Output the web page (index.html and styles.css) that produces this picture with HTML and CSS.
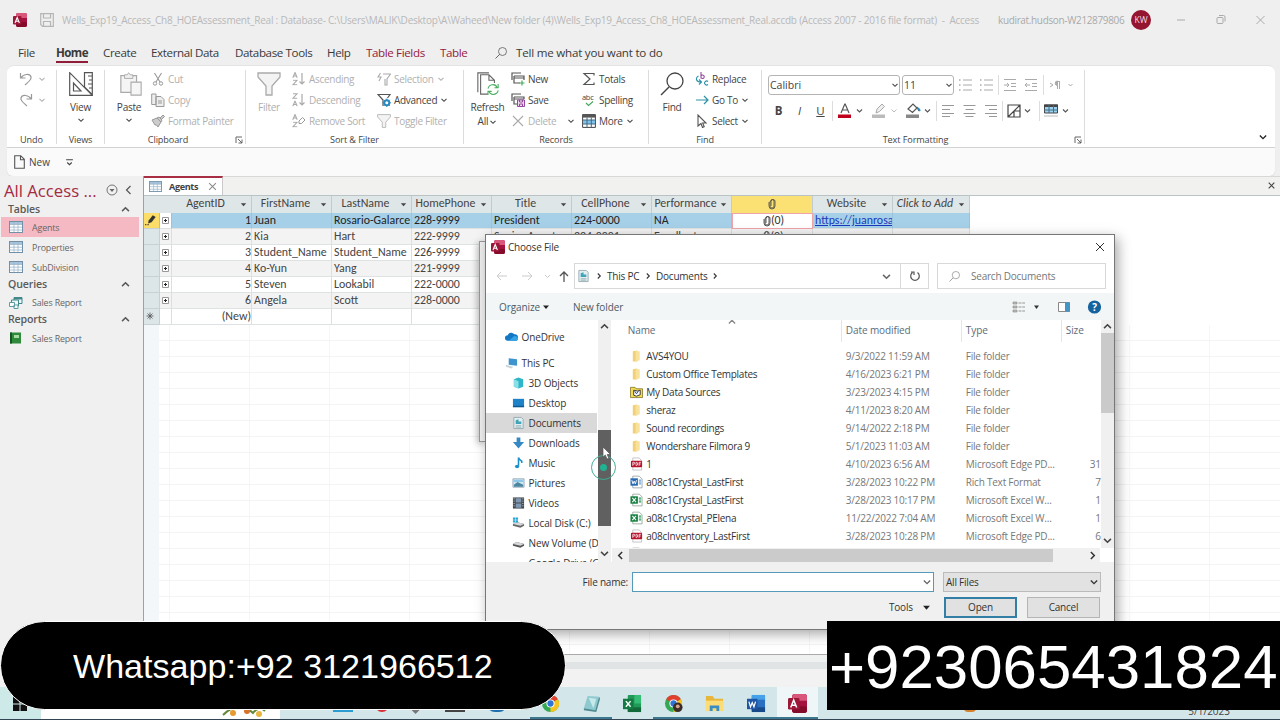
FILE: index.html
```html
<!DOCTYPE html>
<html lang="en">
<head>
<meta charset="UTF-8">
<meta name="viewport" content="width=device-width, initial-scale=1.0">
<title>Access</title>
<link rel="stylesheet" href="styles.css">
</head>
<body>

<svg class="sprite">
    <symbol id="i-access" viewBox="0 0 14 14"><rect x="3" width="11" height="14" rx="2" fill="#a4123f"/><path d="M3 2q0-2 2-2h7q2 0 2 2v3H3z" fill="#d8577b"/><rect x="3" y="9" width="11" height="5" rx="2" fill="#850b2a"/><rect y="3" width="8.500" height="8.500" rx="1" fill="#9c1738"/><path d="M2 10l2.200-5.500L6.400 10M2.800 8.200h2.800" fill="none" stroke="#fff" stroke-width="1.100"/></symbol>
    <symbol id="i-chev" viewBox="0 0 8 8"><path d="M1.500 2.800L4 5.300l2.500-2.500" fill="none" stroke="currentColor" stroke-width="1.100"/></symbol>
    <symbol id="i-tri" viewBox="0 0 8 8"><path d="M1 2.500h6L4 6z" fill="currentColor"/></symbol>
    <symbol id="i-table" viewBox="0 0 14 12"><rect x=".5" y=".5" width="13" height="11" fill="#fff" stroke="#7291a8"/><path d="M1 1h12v2.500H1z" fill="#a6c4dd"/><path d="M1 3.500h12M1 6.200h12M1 9h12M5 1v10M9 1v10" stroke="#9cb6c9" stroke-width=".8"/></symbol>
    <symbol id="i-launch" viewBox="0 0 8 8"><path d="M1 7V1h6M3 3l4 4M7 3.500V7H3.500" fill="none" stroke="#555" stroke-width=".9"/></symbol>
    <symbol id="i-funnel" viewBox="0 0 24 24"><path d="M1 1h22v4l-8 9v9H9v-9L1 5z" fill="#f3f3f3" stroke="#aaa" stroke-width="1.300"/></symbol>
    <symbol id="i-lens" viewBox="0 0 24 24"><circle cx="15" cy="9" r="8" fill="none" stroke="currentColor" stroke-width="1.300"/><path d="M9 15L1 23" stroke="currentColor" stroke-width="1.500"/></symbol>
    <symbol id="i-clip" viewBox="0 0 8 12"><path d="M2 4v4a2 2 0 0 0 4 0V3a1.500 1.500 0 0 0-3 0v5M2 4a3 3 0 0 1 5-1.500V8a3 3 0 0 1-6 0V4" fill="none" stroke="currentColor" stroke-width=".8"/></symbol>
    <symbol id="i-folder" viewBox="0 0 14 14"><path d="M3 2l5-1v12H3z" fill="#f1d077"/><path d="M6 2h4.500v9.500L6 13z" fill="#f8e29b"/></symbol>
    <symbol id="i-pdf" viewBox="0 0 14 14"><path d="M3 .5h7l2.500 3v10H3z" fill="#fff" stroke="#aaa" stroke-width=".7"/><rect x="1" y="3.500" width="12" height="7" rx="1" fill="#b5122b"/><path d="M3 9V5.200h1.200q1 0 1 1t-1 1H3M6.500 5.200V8.600h.6q1.200 0 1.200-1.700t-1.200-1.700zM9.800 9V5.200H12M9.800 7h1.800" fill="none" stroke="#fff" stroke-width=".8"/></symbol>
    <symbol id="i-xls" viewBox="0 0 14 14"><path d="M3 .7h7l3 3v9.600H3z" fill="#fff" stroke="#849b8c" stroke-width=".8"/><path d="M9.500 5h2.500M9.500 7h2.500M9.500 9h2.500" stroke="#299b60" stroke-width="1.200"/><rect x=".5" y="3" width="8" height="8" fill="#16803f"/><path d="M2.500 4.800l4 4.400M6.500 4.800l-4 4.400" stroke="#fff" stroke-width="1.200"/></symbol>
    <symbol id="i-doc" viewBox="0 0 14 14"><path d="M3 .7h7l3 3v9.600H3z" fill="#fff" stroke="#8494a0" stroke-width=".8"/><path d="M9.500 5h2.500M9.500 7h2.500M9.500 9h2.500" stroke="#3a86c9" stroke-width="1"/><rect x=".5" y="3" width="8" height="8" fill="#2a6cb3"/><path d="M2 5l1.200 4L4.500 6l1.300 3L7 5" fill="none" stroke="#fff"/></symbol>
    <symbol id="i-docs" viewBox="0 0 14 14"><path d="M2 1h8l2 2v10H2z" fill="#e2eef0" stroke="#8fa3ab" stroke-width=".9"/><path d="M4 4l3-1v2.500h3V8H4z" fill="#3fa4b8"/><path d="M4 10h6M4 11.500h6" stroke="#98b2ba"/></symbol>
    <symbol id="i-sort" viewBox="0 0 14 14"><path d="M10 1v11M7.500 9.500L10 12l2.500-2.500" fill="none" stroke="#aaa" stroke-width="1.200"/></symbol>
    <symbol id="i-a" viewBox="0 0 6 6"><path d="M.8 5.700L3 .5l2.200 5.200M1.500 4h3" fill="none" stroke="#aaa" stroke-width="1.100"/></symbol>
    <symbol id="i-z" viewBox="0 0 6 6"><path d="M1 .8h4L1 5.200h4.200" fill="none" stroke="#aaa" stroke-width="1.100"/></symbol>
    <symbol id="i-plus" viewBox="0 0 7 7"><path d="M.5.500h6v6h-6z" fill="#fff" stroke="#999"/><path d="M2 3.500h3M3.500 2v3" stroke="#222"/></symbol>
</svg>

<div class="app">
    <div class="titlebar">
        <svg class="logo"><use href="#i-access"/></svg>
        <svg class="save" viewBox="0 0 14 14"><path d="M.7.7h12.600v12.600H2.500L.7 11.500zM3.500 1v4h7V1M3.500 13V8.500h7V13" fill="none" stroke="#b5b5b5" stroke-width="1.200"/></svg>
        <span class="doc-title">Wells_Exp19_Access_Ch8_HOEAssessment_Real : Database- C:\Users\MALIK\Desktop\A\Waheed\New folder (4)\Wells_Exp19_Access_Ch8_HOEAssessment_Real.accdb (Access 2007 - 2016 file format)&nbsp; -&nbsp; Access</span>
        <span class="user">kudirat.hudson-W212879806</span>
        <span class="avatar">KW</span>
        <svg class="winbtns" viewBox="0 0 90 12"><path d="M1 6h8M80.500 2l8 8M88.500 2l-8 8" stroke="#aaa" stroke-width="1" fill="none"/><rect x="41" y="3.500" width="6" height="6" rx="1" fill="none" stroke="#aaa"/><path d="M43 1.500h4.500q1.500 0 1.500 1.500v4.500" fill="none" stroke="#aaa"/></svg>
    </div>

    <div class="menu">
        <span class="m-file">File</span>
        <span class="m-home">Home</span>
        <span class="m-create">Create</span>
        <span class="m-ext">External Data</span>
        <span class="m-db">Database Tools</span>
        <span class="m-help">Help</span>
        <span class="m-fields">Table Fields</span>
        <span class="m-table">Table</span>
        <svg class="m-lens"><use href="#i-lens"/></svg>
        <span class="m-tell">Tell me what you want to do</span>
    </div>

    <div class="ribbon">
        <div class="group g-undo">
            <div class="group-body">
                <div class="col">
                    <div class="cmd off"><svg class="ic" viewBox="0 0 14 14"><path d="M1.500 1v5h5M2 6c2-4 9-5 10-1 .8 3-3 5-6 8" fill="none" stroke="#999" stroke-width="1.200"/></svg><svg class="chev"><use href="#i-chev"/></svg></div>
                    <div class="cmd off"><svg class="ic" viewBox="0 0 14 14"><path d="M12.500 1v5h-5M12 6c-2-4-9-5-10-1-.8 3 3 5 6 8" fill="none" stroke="#999" stroke-width="1.200"/></svg><svg class="chev"><use href="#i-chev"/></svg></div>
                </div>
            </div>
            <div class="group-name">Undo</div>
        </div>
        <div class="group g-views">
            <div class="group-body">
                <div class="big">
                    <svg class="big-ic" viewBox="0 0 24 24"><path d="M.7.7v22.600h22.600zM4.500 11v8h7.500zM15.500 15V.7h7.800v22z" fill="none" stroke="#555" stroke-width="1.200"/><path d="M19 4h4M20 8h3M19 12h4M20 16h3" stroke="#555"/></svg>
                    <span>View</span>
                    <svg class="chev"><use href="#i-chev"/></svg>
                </div>
            </div>
            <div class="group-name">Views</div>
        </div>
        <div class="group g-clip">
            <div class="group-body">
                <div class="big">
                    <svg class="big-ic paste-ic" viewBox="0 0 24 26"><path d="M1 4h17v18H1z" fill="#f5f5f5" stroke="#aaa" stroke-width="1.300"/><path d="M5 7V3h3q1.500-4 3 0h3v4z" fill="#eee" stroke="#aaa"/><path d="M12 11h11v14H12z" fill="#f6f6f6" stroke="#aaa" stroke-width="1.200"/></svg>
                    <span>Paste</span>
                    <svg class="chev"><use href="#i-chev"/></svg>
                </div>
                <div class="col">
                    <div class="cmd off"><svg class="ic" viewBox="0 0 14 14"><path d="M3.500 1l5.500 9M10.500 1L5 10" stroke="#999" stroke-width="1.100"/><circle cx="4" cy="11.500" r="1.700" fill="none" stroke="#999"/><circle cx="10" cy="11.500" r="1.700" fill="none" stroke="#999"/></svg>Cut</div>
                    <div class="cmd off"><svg class="ic" viewBox="0 0 14 14"><path d="M.7 1H5v10.500H.7zM5 3.500h5l3 3v7H5zM7 8h4M7 10h4" fill="#eee" stroke="#999"/></svg>Copy</div>
                    <div class="cmd off"><svg class="ic" viewBox="0 0 14 14"><path d="M1 6l5-2 4 4-3 5-1.500-2L4 11zM6 4l2-1 3 3-1 2M9 4l3-3 1.500 1.500-3 3" fill="#ccc" stroke="#999"/></svg>Format Painter</div>
                </div>
            </div>
            <div class="group-name">Clipboard</div>
            <svg class="launch"><use href="#i-launch"/></svg>
        </div>
        <div class="group g-sort">
            <div class="group-body">
                <div class="big off">
                    <svg class="big-ic"><use href="#i-funnel"/></svg>
                    <span>Filter</span>
                </div>
                <div class="col col-a">
                    <div class="cmd off"><svg class="ic" viewBox="0 0 14 14"><use href="#i-a" width="6" height="6"/><use href="#i-z" y="7.500" width="6" height="6"/><use href="#i-sort" width="14" height="14"/></svg>Ascending</div>
                    <div class="cmd off"><svg class="ic" viewBox="0 0 14 14"><use href="#i-z" width="6" height="6"/><use href="#i-a" y="7.500" width="6" height="6"/><use href="#i-sort" width="14" height="14"/></svg>Descending</div>
                    <div class="cmd off"><svg class="ic" viewBox="0 0 14 14"><use href="#i-a" width="6" height="6"/><use href="#i-z" y="7.500" width="6" height="6"/><path d="M7 7l3.500-3.500L13 6 9.500 9.500H7z" fill="none" stroke="#999"/></svg>Remove Sort</div>
                </div>
                <div class="col">
                    <div class="cmd off"><svg class="ic" viewBox="0 0 14 14"><path d="M6 2h7.500L10 7v6H8V7M3.500 1L1 5h3L2 9" fill="none" stroke="#aaa" stroke-width="1.100"/></svg>Selection<svg class="chev"><use href="#i-chev"/></svg></div>
                    <div class="cmd"><svg class="ic" viewBox="0 0 14 14"><path d="M6 13V7L1 1.500h12L10.500 5" fill="none" stroke="#555" stroke-width="1.200"/><circle cx="9.800" cy="9.800" r="2.500" fill="#fff" stroke="#2b8bc0" stroke-width="2"/><path d="M9.800 5.500v2M9.800 12v2M5.600 9.800h2M12 9.800h2M6.800 6.800l1.500 1.500M11.300 11.300l1.500 1.500M12.800 6.800l-1.500 1.500M8.300 11.300l-1.500 1.500" stroke="#2b8bc0"/></svg>Advanced<svg class="chev"><use href="#i-chev"/></svg></div>
                    <div class="cmd off"><svg class="ic"><use href="#i-funnel"/></svg>Toggle Filter</div>
                </div>
            </div>
            <div class="group-name">Sort &amp; Filter</div>
        </div>
        <div class="group g-rec">
            <div class="group-body">
                <div class="big big-refresh">
                    <svg class="big-ic" viewBox="0 0 24 26"><path d="M1 22V1h12" fill="none" stroke="#666" stroke-width="1.200"/><path d="M12 24H4V3h9l6 6v3M13 3v6h6" fill="none" stroke="#666" stroke-width="1.200"/><path d="M12 18c1-5 8-6 10-1M23 13v4h-4M23 20c-1 5-8 6-10 1M12 25v-4h4" fill="none" stroke="#4bae62" stroke-width="1.200"/></svg>
                    <span>Refresh</span>
                    <span>All <svg class="chev"><use href="#i-chev"/></svg></span>
                </div>
                <div class="col col-a">
                    <div class="cmd"><svg class="ic" viewBox="0 0 14 14"><path d="M1 8V1h9M3 4h10v4M3 4v7h6M3 6h10" fill="none" stroke="#555" stroke-width="1.200"/><path d="M11 8.500v5M8.500 11h5" stroke="#45aa5d" stroke-width="1.200"/></svg>New</div>
                    <div class="cmd"><svg class="ic" viewBox="0 0 14 14"><path d="M1 8V1h9M3 4h10v2M3 4v7h3M3 6h10" fill="none" stroke="#555" stroke-width="1.200"/><path d="M6.500 7h7v6.500h-7zM8.500 7v2h3V7M8.500 13v-2h3v2" fill="#efd9f0" stroke="#964a9c"/></svg>Save</div>
                    <div class="cmd off"><svg class="ic" viewBox="0 0 14 14"><path d="M2 2l10 10M12 2L2 12" stroke="#aaa" stroke-width="1.100"/></svg>Delete<svg class="chev chev-far"><use href="#i-chev"/></svg></div>
                </div>
                <div class="col">
                    <div class="cmd"><svg class="ic" viewBox="0 0 14 14"><path d="M12 3.500V1.500H2L8 7l-6 5.500h10v-2" fill="none" stroke="#555" stroke-width="1.200"/></svg>Totals</div>
                    <div class="cmd"><span class="ic abc">abc<svg viewBox="0 0 14 6"><path d="M4 2l2.500 2.500L11 .5" fill="none" stroke="#45aa5d" stroke-width="1.200"/></svg></span>Spelling</div>
                    <div class="cmd"><svg class="ic" viewBox="0 0 14 14"><path d="M.6.6h12.800v12.800H.6z" fill="#fff" stroke="#444"/><path d="M.6.6h12.800v3H.6z" fill="#555"/><path d="M1 6h12v4H1z" fill="#7fc3ec"/><path d="M.6 6h12.800M.6 10h12.800M5 3.600v9.800M9.300 3.600v9.800" stroke="#446a80"/></svg>More<svg class="chev"><use href="#i-chev"/></svg></div>
                </div>
            </div>
            <div class="group-name">Records</div>
        </div>
        <div class="group g-find">
            <div class="group-body">
                <div class="big">
                    <svg class="big-ic"><use href="#i-lens"/></svg>
                    <span>Find</span>
                </div>
                <div class="col">
                    <div class="cmd"><svg class="ic" viewBox="0 0 14 14"><path d="M6 0v6.500M6 4a1.700 1.700 0 1 1 0 1.500" fill="none" stroke="#964a9c" stroke-width="1.100"/><path d="M13 9.500a2 2 0 1 0 0 3M3.500 4C0 6 1 10 6 10M4 7.500L6.500 10 4 12.500" fill="none" stroke="#2e91a5" stroke-width="1.100"/></svg>Replace</div>
                    <div class="cmd"><svg class="ic" viewBox="0 0 14 14"><path d="M1 7h12M9 3l4 4-4 4" fill="none" stroke="#2e91a5" stroke-width="1.200"/></svg>Go To<svg class="chev"><use href="#i-chev"/></svg></div>
                    <div class="cmd"><svg class="ic" viewBox="0 0 14 14"><path d="M3 1v11l3-2.500 1.500 4 1.700-.8L7.700 9H11z" fill="none" stroke="#555" stroke-width="1.100"/></svg>Select<svg class="chev"><use href="#i-chev"/></svg></div>
                </div>
            </div>
            <div class="group-name">Find</div>
        </div>
        <div class="group g-text">
            <div class="group-body format">
                <div class="format-row">
                    <div class="combo font-name">Calibri<svg class="chev"><use href="#i-chev"/></svg></div>
                    <div class="combo font-size">11<svg class="chev"><use href="#i-chev"/></svg></div>
                    <svg class="row-ics" viewBox="0 0 120 20"><g stroke="#aaa" fill="none"><path d="M9 5h9M9 10h9M9 15h9M30 5h9M30 10h9M30 15h9M50 4.500h12M57 8.500h5M57 11.500h5M50 15.500h12M50 10h5M53 8l2 2-2 2M71 4.500h12M78 8.500h5M78 11.500h5M71 15.500h12M71 10h5M73 8l-2 2 2 2"/><path d="M5 5h1.500M5 10h1.500M5 15h1.500M26 5h1.500M26 10h1.500M26 15h1.500" stroke-width="1.500"/><path d="M44.500 0v20M89.500 0v20" stroke="#ddd"/><path d="M96 8l3 2-3 2M103.500 14V6.500h2.500M105.500 6.500V14"/><path d="M103.500 6v4.500a2 2 0 0 1 0-4.500" fill="#aaa"/><path d="M114.500 9l2 2 2-2"/></g></svg>
                </div>
                <div class="format-row">
                    <b class="fb">B</b><i class="fb">I</i><u class="fb">U</u>
                    <svg class="row-ics2" viewBox="0 0 245 20">
                        <path d="M1.500 0v20M105.500 0v20M171.500 0v20M208.500 0v20" stroke="#ddd"/>
                        <path d="M10 12l3.800-9h.4l3.800 9M11.500 9h5" fill="none" stroke="#555" stroke-width="1.200"/><rect x="7" y="13.500" width="13" height="3.500" fill="#c0001a"/>
                        <path d="M26 8.500l2.500 2.500 2.500-2.500M94 8.500l2.500 2.500L99 8.500M194 8.500l2.500 2.500 2.500-2.500M232 8.500l2.500 2.500 2.500-2.500" fill="none" stroke="#555" stroke-width="1.100"/>
                        <path d="M60.500 8.500l2.500 2.500 2.500-2.500" fill="none" stroke="#bbb"/>
                        <path d="M45 12l1-4 5-5 2.500 2.500-5 5z" fill="#eee" stroke="#aaa"/><rect x="41" y="13.500" width="13" height="3.500" fill="#bbb"/>
                        <path d="M77 8l5-5 4 4-4.500 4.500zM86 6l2 4" fill="#fff" stroke="#555" stroke-width="1.200"/><path d="M87 7l2 3" stroke="#2b8bc0" stroke-width="2"/><rect x="75" y="13.500" width="13" height="3.500" fill="#888"/>
                        <path d="M111 4.500h12M111 8.500h8M111 12.500h12M111 15.500h8M132.500 4.500h12M134.500 8.500h8M132.500 12.500h12M134.500 15.500h8M154 4.500h12M158 8.500h8M154 12.500h12M158 15.500h8" stroke="#999"/>
                        <path d="M177 4h12v12h-12zM177 16l12-12M183 16v-6h6" fill="none" stroke="#444" stroke-width="1.200"/>
                        <path d="M213.500 4h13v8h-13z" fill="#9bd2f0" stroke="#444"/><path d="M213 3.500h14v2.500h-14z" fill="#444"/><path d="M213 9h14M218 4v8M222.500 4v8" stroke="#446a80"/><path d="M213 15h14" stroke="#ddd" stroke-width="2"/>
                    </svg>
                </div>
            </div>
            <div class="group-name">Text Formatting</div>
            <svg class="launch"><use href="#i-launch"/></svg>
        </div>
        <svg class="collapse"><use href="#i-chev"/></svg>
    </div>

    <div class="quick">
        <svg class="page-ic" viewBox="0 0 11 14"><path d="M.7.7h6l3.600 3.600v9H.7zM6.500.7v4h4" fill="none" stroke="#555" stroke-width="1.100"/></svg>
        <span>New</span>
        <svg class="more-ic" viewBox="0 0 8 8"><path d="M1 1.500h6M2 4l2 2 2-2" fill="none" stroke="#444"/></svg>
    </div>

    <div class="work">
        <div class="nav">
            <div class="nav-title"><span>All Access ...</span>
                <svg class="nav-ics" viewBox="0 0 28 12"><circle cx="6" cy="6" r="5" fill="none" stroke="#666" stroke-width=".9"/><path d="M3.500 5h5L6 8z" fill="#666"/><path d="M24.500 2l-4 4 4 4" fill="none" stroke="#555" stroke-width="1.200"/></svg>
            </div>
            <div class="nav-head">Tables<svg class="up"><use href="#i-chev"/></svg></div>
            <div class="nav-item active"><svg><use href="#i-table"/></svg>Agents</div>
            <div class="nav-item"><svg><use href="#i-table"/></svg>Properties</div>
            <div class="nav-item"><svg><use href="#i-table"/></svg>SubDivision</div>
            <div class="nav-head">Queries<svg class="up"><use href="#i-chev"/></svg></div>
            <div class="nav-item single"><svg viewBox="0 0 14 12"><path d="M5 .5h8v6H5z" fill="#eef8f8" stroke="#41878c"/><path d="M2.500 3h7v6h-7z" fill="#eef8f8" stroke="#41878c"/><path d="M.5 5.500h5v4h-5zM5 8h4v3.500H5z" fill="#fff" stroke="#5b9da5"/><path d="M5 1h8v1.500H5z" fill="#41878c"/></svg>Sales Report</div>
            <div class="nav-head">Reports<svg class="up"><use href="#i-chev"/></svg></div>
            <div class="nav-item single"><svg viewBox="0 0 14 12"><path d="M1 .5h11v11H1z" fill="#2f8a3c"/><path d="M1 .5h2v11H1z" fill="#14561f"/><path d="M5 3h5v3H5z" fill="#a8dba4"/></svg>Sales Report</div>
        </div>

        <div class="main">
            <div class="doc-tabs">
                <div class="doc-tab"><svg class="tab-ic"><use href="#i-table"/></svg><b>Agents</b><svg class="x" viewBox="0 0 8 8"><path d="M1 1l6 6M7 1L1 7" stroke="#888" stroke-width=".9"/></svg></div>
                <svg class="x close-all" viewBox="0 0 8 8"><path d="M1.500 1.500l5 5M6.500 1.500l-5 5" stroke="#444"/></svg>
            </div>
            <div class="sheet">
                <div class="row head">
                    <span></span><span></span>
                    <span>AgentID<svg><use href="#i-tri"/></svg></span>
                    <span>FirstName<svg><use href="#i-tri"/></svg></span>
                    <span>LastName<svg><use href="#i-tri"/></svg></span>
                    <span>HomePhone<svg><use href="#i-tri"/></svg></span>
                    <span>Title<svg><use href="#i-tri"/></svg></span>
                    <span>CellPhone<svg><use href="#i-tri"/></svg></span>
                    <span>Performance<svg><use href="#i-tri"/></svg></span>
                    <span class="attach"><svg class="clip"><use href="#i-clip"/></svg></span>
                    <span>Website<svg><use href="#i-tri"/></svg></span>
                    <span class="add">Click to Add<svg><use href="#i-tri"/></svg></span>
                </div>
                <div class="row current">
                    <span class="edit"><svg viewBox="0 0 12 10"><path d="M3.500 8L4 5.500 7.500 1 10 2.500 6.500 7z" fill="#333"/><path d="M1 9h1M3 9h1" stroke="#333"/></svg></span><span class="plus"><svg><use href="#i-plus"/></svg></span>
                    <span class="num">1</span><span>Juan</span><span>Rosario-Galarce</span><span>228-9999</span><span>President</span><span>224-0000</span><span>NA</span>
                    <span class="cell-attach"><svg class="clip"><use href="#i-clip"/></svg>(0)</span><span class="link">https://juanrosa</span><span></span>
                </div>
                <div class="row alt"><span></span><span class="plus"><svg><use href="#i-plus"/></svg></span><span class="num">2</span><span>Kia</span><span>Hart</span><span>222-9999</span><span>Senior Agent</span><span>224-0001</span><span>Excellent</span><span class="att"><svg class="clip"><use href="#i-clip"/></svg>(0)</span><span></span><span></span></div>
                <div class="row"><span></span><span class="plus"><svg><use href="#i-plus"/></svg></span><span class="num">3</span><span>Student_Name</span><span>Student_Name</span><span>226-9999</span><span></span><span></span><span></span><span></span><span></span><span></span></div>
                <div class="row alt"><span></span><span class="plus"><svg><use href="#i-plus"/></svg></span><span class="num">4</span><span>Ko-Yun</span><span>Yang</span><span>221-9999</span><span></span><span></span><span></span><span></span><span></span><span></span></div>
                <div class="row"><span></span><span class="plus"><svg><use href="#i-plus"/></svg></span><span class="num">5</span><span>Steven</span><span>Lookabil</span><span>222-0000</span><span></span><span></span><span></span><span></span><span></span><span></span></div>
                <div class="row alt"><span></span><span class="plus"><svg><use href="#i-plus"/></svg></span><span class="num">6</span><span>Angela</span><span>Scott</span><span>228-0000</span><span></span><span></span><span></span><span></span><span></span><span></span></div>
                <div class="row"><span class="star"><svg viewBox="0 0 8 8"><path d="M4 .5v7M.5 4h7M1.500 1.500l5 5M6.500 1.500l-5 5" stroke="#555" stroke-width=".8"/></svg></span><span></span><span class="num">(New)</span><span></span><span></span><span></span><span></span><span></span><span></span><span></span><span></span><span></span></div>
                <div class="blank"></div>
            </div>
            <div class="record-bar"></div>
        </div>
    </div>
    <div class="status"></div>

    <div class="taskbar">
        <div class="start"><svg viewBox="0 0 14 14"><path d="M0 0h6.500v6.500H0zM7.500 0H14v6.500H7.500zM0 7.500h6.500V14H0zM7.500 7.500H14V14H7.500z" fill="#111"/></svg></div>
        <div class="search-box"><svg viewBox="0 0 48 16"><path d="M2 12q8-8 16-8t14 6q6-8 12-2" fill="none" stroke="#66883c" stroke-width="2"/><circle cx="12" cy="10" r="3" fill="#e59a32"/><circle cx="26" cy="8" r="3" fill="#d8702c"/><circle cx="38" cy="11" r="3" fill="#e8b441"/></svg></div>
        <div class="hidden-apps"><i class="c1"></i><i class="c2"></i><i class="c3"></i><i class="c4"></i><i class="c5"></i></div>
        <div class="task open"><svg viewBox="0 0 20 20"><circle cx="10" cy="10" r="9" fill="#35a853"/><path d="M10 10L2.200 5.500a9 9 0 0 1 15.600 0z" fill="#e2402f"/><path d="M10 10l7.800-4.500A9 9 0 0 1 10 19z" fill="#f8c51e"/><circle cx="10" cy="10" r="4.300" fill="#fff"/><circle cx="10" cy="10" r="3.300" fill="#2f75d8"/></svg></div>
        <div class="task open"><svg viewBox="0 0 20 20"><path d="M6 2l12 1-4 15-12-3z" fill="#8ec9cf"/><path d="M18 3l1 2-4 14-13-2v-2l12 2z" fill="#4e8a90"/><path d="M7 4l8 1-3 10" fill="#c6e9ea"/></svg></div>
        <div class="task"><svg viewBox="0 0 20 20"><rect x="5" y="1" width="14" height="18" rx="1" fill="#1f9a57"/><path d="M12 1h7v9h-7z" fill="#35bd75"/><path d="M5 14h14v5H5z" fill="#12693a"/><rect y="5" width="11" height="11" fill="#137a41"/><path d="M3 7.500l5 6M8 7.500l-5 6" stroke="#fff" stroke-width="1.600"/></svg></div>
        <div class="task open"><svg viewBox="0 0 20 20"><circle cx="10" cy="10" r="9" fill="#35a853"/><path d="M10 10L2.200 5.500a9 9 0 0 1 15.600 0z" fill="#e2402f"/><path d="M10 10l7.800-4.500A9 9 0 0 1 10 19z" fill="#f8c51e"/><circle cx="10" cy="10" r="4.300" fill="#fff"/><circle cx="10" cy="10" r="3.300" fill="#2f75d8"/><circle cx="14.500" cy="14" r="5" fill="#3c2c28"/><circle cx="14.500" cy="13" r="2" fill="#d9a88c"/></svg></div>
        <div class="task open"><svg viewBox="0 0 20 20"><path d="M1 2h7l2 3h9v13H1z" fill="#e8b63a"/><path d="M1 7h18v11H1z" fill="#fbdc77"/><path d="M5 18v-6h10v6h-3v-3H8v3z" fill="#3a8cc4"/></svg></div>
        <div class="task open"><svg viewBox="0 0 20 20"><rect x="5" y="1" width="14" height="18" rx="1" fill="#2a6fc0"/><path d="M5 1h14v5H5z" fill="#45a2ea"/><path d="M5 14h14v5H5z" fill="#174a8a"/><rect y="5" width="11" height="11" fill="#1f55a5"/><path d="M2 8l1.700 5.500L5.500 9l1.800 4.500L9 8" fill="none" stroke="#fff" stroke-width="1.300"/></svg></div>
        <div class="task current-app open"><svg><use href="#i-access"/></svg></div>
        <div class="tray"><i></i><span>5/1/2023</span></div>
    </div>
</div>

<div class="under-dialog"></div>

<div class="dialog">
    <div class="dlg-title"><svg class="logo"><use href="#i-access"/></svg><span>Choose File</span><svg class="dlg-x" viewBox="0 0 10 10"><path d="M1 1l8 8M9 1L1 9" stroke="#333"/></svg></div>
    <div class="dlg-nav">
        <svg class="arrows" viewBox="0 0 80 14"><path d="M17 7H7M11 3L7 7l4 4M32 7h10M38 3l4 4-4 4M55 6l2.500 2.500L60 6" fill="none" stroke="#ccc"/><path d="M74 13V3M70 7l4-4 4 4" fill="none" stroke="#555" stroke-width="1.300"/></svg>
        <div class="path"><svg class="docs"><use href="#i-docs"/></svg><svg class="right"><use href="#i-chev"/></svg><span class="pc">This PC</span><svg class="right"><use href="#i-chev"/></svg><span class="dc">Documents</span><svg class="right"><use href="#i-chev"/></svg><svg class="drop"><use href="#i-chev"/></svg>
            <div class="reload"><svg viewBox="0 0 12 12"><path d="M3.500 2.500a4.300 4.300 0 1 0 5 0M2 2h3v3" fill="none" stroke="#555" stroke-width="1.200"/></svg></div></div>
        <div class="search"><svg><use href="#i-lens"/></svg>Search Documents</div>
    </div>
    <div class="dlg-tools">
        <span class="org">Organize</span><svg class="tri"><use href="#i-tri"/></svg><span class="nf">New folder</span>
        <svg class="view-ics" viewBox="0 0 90 14"><path d="M1 2h4v2H1zM1 6h4v2H1zM1 10h4v2H1z" fill="#bbb" stroke="#888" stroke-width=".6"/><path d="M6.500 3H13M6.500 7H13M6.500 11H13" stroke="#999" stroke-dasharray="3 .7"/><path d="M22 5.500h5L24.500 9z" fill="#333"/><path d="M46.500 2.500h11v9h-11z" fill="#fff" stroke="#888"/><path d="M53 2.500h5v9h-5z" fill="#4295c7"/><circle cx="82.500" cy="7" r="6.600" fill="#14629e"/><text x="80.200" y="10.600" font-size="10" font-weight="700" fill="#fff">?</text></svg>
    </div>
    <div class="dlg-body">
        <div class="tree">
            <div class="leaf top"><svg viewBox="0 0 14 14"><path d="M3 11a3 3 0 0 1 0-6 4 4 0 0 1 7-1 3.500 3.500 0 0 1 1 7z" fill="#1278c4"/><path d="M4 11l6-5q4 0 4 3t-3 2z" fill="#35a3e8"/></svg>OneDrive</div>
            <div class="leaf top"><svg viewBox="0 0 14 14"><path d="M4 2l9 1v7l-9-1z" fill="#3e94cc"/><path d="M1 9l8 2-2 2-6-2z" fill="#c8d4da"/></svg>This PC</div>
            <div class="leaf"><svg viewBox="0 0 14 14"><path d="M2 3l5-2 5 2v8l-5 2-5-2z" fill="#2db5c8"/><path d="M2 3l5 2v8l-5-2z" fill="#8be0e7"/></svg>3D Objects</div>
            <div class="leaf"><svg viewBox="0 0 14 14"><path d="M1 2.500h12v9H1z" fill="#1d82c8"/><path d="M1 10h12v1.500H1z" fill="#0d588f"/></svg>Desktop</div>
            <div class="leaf sel"><svg><use href="#i-docs"/></svg>Documents</div>
            <div class="leaf"><svg viewBox="0 0 14 14"><path d="M5 1h4v5h4l-6 7-6-7h4z" fill="#3489c5"/></svg>Downloads</div>
            <div class="leaf"><svg viewBox="0 0 14 14"><path d="M7 1v9M7 1q1 3 3.500 4v2" fill="none" stroke="#1d91c9" stroke-width="1.700"/><ellipse cx="5.500" cy="10.800" rx="2.300" ry="1.900" fill="#1d91c9"/></svg>Music</div>
            <div class="leaf"><svg viewBox="0 0 14 14"><path d="M1 2.500h12v9H1z" fill="#d8e8ee" stroke="#9ab"/><path d="M2 9l4-3 6 3v2H2z" fill="#4a86a0"/><path d="M2 3.500h10V6H2z" fill="#8dc8e8"/></svg>Pictures</div>
            <div class="leaf"><svg viewBox="0 0 14 14"><path d="M1 1h12v12H1z" fill="#43494f"/><path d="M4 2h6v4.500H4zM4 7.500h6V12H4z" fill="#7e98b4"/><path d="M2.300 2v10M11.700 2v10" stroke="#ddd" stroke-dasharray="1 1.500"/></svg>Videos</div>
            <div class="leaf"><svg viewBox="0 0 14 14"><path d="M1 8l4-2 8 2v2l-4 2-8-2z" fill="#666"/><path d="M1 8l4-2 8 2-4 2z" fill="#d5d8da"/><path d="M1 1h2.500v2.500H1zM4 1h2.500v2.500H4zM1 4h2.500v2.500H1zM4 4h2.500v2.500H4z" fill="#22a7d8"/></svg>Local Disk (C:)</div>
            <div class="leaf"><svg viewBox="0 0 14 14"><path d="M1 8l4-2 8 2v2l-4 2-8-2z" fill="#555"/><path d="M1 8l4-2 8 2-4 2z" fill="#d5d8da"/></svg>New Volume (D</div>
            <div class="leaf"><svg></svg>Google Drive (G</div>
        </div>
        <div class="vbar tree-bar"><svg class="up"><use href="#i-chev"/></svg><div class="thumb"></div><svg><use href="#i-chev"/></svg></div>
        <div class="files">
            <div class="files-top">
                <div class="list">
                    <div class="f head"><span>Name</span><span>Date modified</span><span>Type</span><span>Size</span></div>
                    <div class="f"><svg><use href="#i-folder"/></svg><span>AVS4YOU</span><span>9/3/2022 11:59 AM</span><span>File folder</span><span></span></div>
                    <div class="f"><svg><use href="#i-folder"/></svg><span>Custom Office Templates</span><span>4/16/2023 6:21 PM</span><span>File folder</span><span></span></div>
                    <div class="f"><svg viewBox="0 0 14 14"><path d="M.5 2h5l1 1.500h7V13H.5z" fill="#f5dc4e" stroke="#776b20" stroke-width=".8"/><path d="M4 5l4 1 3-1v5l-4 1.500-3-1z" fill="#fff" stroke="#333"/><path d="M5 6l2 3 2-3" fill="none" stroke="#26408c"/></svg><span>My Data Sources</span><span>3/23/2023 4:15 PM</span><span>File folder</span><span></span></div>
                    <div class="f"><svg><use href="#i-folder"/></svg><span>sheraz</span><span>4/11/2023 8:20 AM</span><span>File folder</span><span></span></div>
                    <div class="f"><svg><use href="#i-folder"/></svg><span>Sound recordings</span><span>9/14/2022 2:18 PM</span><span>File folder</span><span></span></div>
                    <div class="f"><svg><use href="#i-folder"/></svg><span>Wondershare Filmora 9</span><span>5/1/2023 11:03 AM</span><span>File folder</span><span></span></div>
                    <div class="f"><svg><use href="#i-pdf"/></svg><span>1</span><span>4/10/2023 6:56 AM</span><span>Microsoft Edge PD...</span><span>31</span></div>
                    <div class="f"><svg><use href="#i-doc"/></svg><span>a08c1Crystal_LastFirst</span><span>3/28/2023 10:22 PM</span><span>Rich Text Format</span><span>7</span></div>
                    <div class="f"><svg><use href="#i-xls"/></svg><span>a08c1Crystal_LastFirst</span><span>3/28/2023 10:17 PM</span><span>Microsoft Excel W...</span><span>1</span></div>
                    <div class="f"><svg><use href="#i-xls"/></svg><span>a08c1Crystal_PElena</span><span>11/22/2022 7:04 AM</span><span>Microsoft Excel W...</span><span>1</span></div>
                    <div class="f"><svg><use href="#i-pdf"/></svg><span>a08cInventory_LastFirst</span><span>3/28/2023 10:28 PM</span><span>Microsoft Edge PD...</span><span>6</span></div>
                    <div class="f"><svg><use href="#i-pdf"/></svg></div>
                    <svg class="sort-mark up"><use href="#i-chev"/></svg>
                </div>
                <div class="vbar list-bar"><svg class="up"><use href="#i-chev"/></svg><div class="thumb"></div><svg><use href="#i-chev"/></svg></div>
            </div>
            <div class="hbar"><svg class="left"><use href="#i-chev"/></svg><div class="thumb"></div><svg class="right"><use href="#i-chev"/></svg><div class="corner"></div></div>
        </div>
    </div>
    <div class="dlg-foot">
        <div class="foot-row"><label>File name:</label><div class="name-box"><svg><use href="#i-chev"/></svg></div><div class="type-box">All Files<svg><use href="#i-chev"/></svg></div></div>
        <div class="foot-row"><span class="tools">Tools</span><svg class="tri"><use href="#i-tri"/></svg><div class="btn primary">Open</div><div class="btn">Cancel</div></div>
    </div>
</div>

<div class="click-ring"><i></i></div>
<svg class="pointer" viewBox="0 0 10 14"><path d="M1 1v10l2.300-2L5 13l1.800-.8L5.200 8.500H8.500z" fill="#fff" stroke="#555" stroke-width=".7"/></svg>

<div class="pill">Whatsapp:+92 3121966512</div>
<div class="phone">+923065431824</div>

</body>
</html>
```

FILE: styles.css
```css
* {
    box-sizing: border-box;
}
body {
    margin: 0;
    width: 1280px;
    height: 720px;
    overflow: hidden;
    position: relative;
    font-family: "Open Sans", "Noto Sans", sans-serif;
    font-size: 10px;
    color: #444;
    background-color: #efefef;
    white-space: nowrap;
}
svg {
    flex: none;
    display: block;
}
.sprite {
    position: absolute;
    width: 0;
    height: 0;
}
.up {
    transform: rotate(180deg);
}
.left {
    transform: rotate(90deg);
}
.right {
    transform: rotate(-90deg);
}
.app {
    width: 1280px;
    height: 720px;
    display: flex;
    flex-direction: column;
}

/* title bar */
.titlebar {
    height: 40px;
    display: flex;
    align-items: center;
    padding-left: 13px;
    color: #b8b8b8;
}
.logo {
    width: 14px;
    height: 14px;
}
.save {
    width: 14px;
    height: 14px;
    margin-left: 13px;
}
.doc-title {
    flex: none;
    margin-left: 8px;
    width: 936px;
    letter-spacing: -0.22px;
}
.user {
    flex: none;
    width: 133px;
    letter-spacing: -0.35px;
    color: #aaa;
}
.avatar {
    width: 20px;
    height: 20px;
    border-radius: 50%;
    background-color: #94152f;
    color: #f4dce2;
    font-size: 8.5px;
    line-height: 20px;
    text-align: center;
}
.winbtns {
    width: 90px;
    height: 12px;
    margin-left: 25px;
}

/* menu */
.menu {
    height: 25px;
    display: flex;
    align-items: center;
    font-size: 11.6px;
    letter-spacing: -0.38px;
    color: #3a3a3a;
    padding-left: 18px;
    padding-top: 1px;
}
.m-file { width: 38px; }
.m-home {
    width: 32px;
    margin-right: 15px;
    font-weight: 700;
    letter-spacing: -0.6px;
    height: 20px;
    line-height: 19px;
    border-bottom: 2px solid #8f1d3a;
}
.m-create { width: 48px; }
.m-ext { width: 84px; }
.m-db { width: 92px; }
.m-help { width: 39px; }
.m-fields { width: 74px; }
.m-table { width: 55px; }
.m-fields, .m-table {
    color: #94203f;
}
.m-lens {
    width: 12px;
    height: 12px;
}
.m-tell {
    margin-left: 9px;
    letter-spacing: -0.22px;
}

/* ribbon */
.ribbon {
    height: 83px;
    margin: 0 5px 0 7px;
    background-color: #fff;
    border-top: 1px solid #e4e4e4;
    border-bottom: 1px solid #d2d2d2;
    border-radius: 7px 7px 0 0;
    display: flex;
    position: relative;
    letter-spacing: -0.3px;
}
.group {
    position: relative;
    display: flex;
    flex-direction: column;
    margin: 4px 0 3px;
    border-right: 1px solid #dcdcdc;
}
.g-undo { width: 50px; }
.g-views { width: 48px; }
.g-clip { width: 141px; }
.g-sort { width: 218px; }
.g-rec { width: 185px; }
.g-find { width: 113px; }
.g-text { width: 323px; }
.group-body {
    display: flex;
    flex: none;
    height: 65px;
    margin-top: -2px;
}
.group-name {
    text-align: center;
    font-size: 9.1px;
    line-height: 14px;
    letter-spacing: -0.1px;
    color: #444;
}
.g-clip .group-name {
    padding-right: 14px;
}
.g-text .group-name {
    padding-right: 15px;
}
.launch {
    position: absolute;
    right: 2px;
    bottom: 0;
    width: 8px;
    height: 8px;
}
.col {
    display: flex;
    flex-direction: column;
}
.cmd {
    display: flex;
    align-items: center;
    height: 21.4px;
}
.off {
    color: #b0b0b0;
}
.ic {
    width: 14px;
    height: 14px;
    margin-right: 3px;
}
.abc {
    font-size: 7.5px;
    line-height: 8px;
}
.abc svg {
    width: 14px;
    height: 6px;
}
.chev {
    width: 8px;
    height: 8px;
    margin-left: 3px;
    display: inline-block;
}
.chev-far {
    margin-left: 11px;
    color: #444;
}
.big {
    display: flex;
    flex-direction: column;
    align-items: center;
    line-height: 14px;
    font-size: 10.1px;
}
.big-ic {
    width: 24px;
    height: 24px;
    margin: 4px 0 4px;
}
.big .chev {
    margin: 2px 0 0;
}
.big span .chev {
    margin: 0 0 -1px -1px;
}
.g-undo .col {
    padding-left: 12px;
}
.g-undo .chev {
    margin-left: 2px;
}
.g-views .big {
    width: 47px;
}
.g-clip .big {
    width: 46px;
    padding-left: 2px;
}
.g-clip .paste-ic {
    margin-left: 3px;
}
.g-sort .big {
    width: 46px;
}
.g-sort .col-a {
    width: 85px;
}
.g-rec .big {
    width: 47px;
}
.g-rec .col-a {
    width: 71px;
}
.g-find .big {
    width: 46px;
}
.format {
    flex-direction: column;
    padding: 4px 0 0 6px;
    letter-spacing: 0;
}
.format-row {
    display: flex;
    align-items: center;
    height: 26px;
}
.combo {
    display: flex;
    justify-content: space-between;
    align-items: center;
    height: 20px;
    border: 1px solid #b4b4b4;
    border-radius: 3px;
    padding-left: 1px;
    margin-right: 2px;
    font-size: 10.5px;
}
.font-name { width: 132px; }
.font-size { width: 52px; margin-right: 0; }
.row-ics {
    width: 120px;
    height: 20px;
}
.fb {
    width: 21px;
    text-align: center;
    font-size: 11.5px;
}
.row-ics2 {
    width: 245px;
    height: 20px;
}
.collapse {
    position: absolute;
    right: 7px;
    bottom: 5px;
    width: 10px;
    height: 10px;
    color: #222;
}

/* quick access */
.quick {
    height: 28px;
    margin: 0 5px 0 7px;
    background-color: #fafafa;
    border-radius: 0 0 6px 6px;
    box-shadow: 0 1px 1px #ddd;
    display: flex;
    align-items: center;
    padding-left: 7px;
    padding-top: 1px;
}
.page-ic {
    width: 11px;
    height: 14px;
    margin-right: 4px;
}
.more-ic {
    width: 9px;
    height: 9px;
    margin-left: 15px;
}

/* navigation pane */
.work {
    height: 494px;
    display: flex;
}
.nav {
    width: 143px;
    padding-top: 4px;
    background-color: #f0f0f0;
}
.nav-title {
    height: 22px;
    display: flex;
    align-items: center;
    justify-content: space-between;
    padding: 0 9px 1px 4px;
    font-size: 16.7px;
    color: #a32b43;
}
.nav-ics {
    width: 28px;
    height: 12px;
}
.nav-head {
    height: 15px;
    line-height: 15px;
    padding: 0 12px 0 8px;
    display: flex;
    align-items: center;
    justify-content: space-between;
    font-family: "Open Sans", sans-serif;
    font-weight: 600;
    font-size: 10.6px;
    letter-spacing: -0.15px;
    color: #5a5a5a;
}
.nav-head svg {
    width: 11px;
    height: 11px;
}
.nav-item {
    height: 20px;
    margin: 0 4px 0 1px;
    padding-left: 8px;
    padding-top: 1px;
    display: flex;
    align-items: center;
    font-size: 8.9px;
    letter-spacing: -0.15px;
    color: #666;
}
.nav-item svg {
    width: 14px;
    height: 12px;
    margin-right: 9px;
}
.nav-item.active {
    background-color: #f5b9c3;
}
.single {
    height: 20.5px;
}

/* datasheet */
.main {
    flex: 1;
    border-left: 1px solid #9aa4a8;
    display: flex;
    flex-direction: column;
    background-color: #f1f2ef;
}
.doc-tabs {
    height: 20px;
    display: flex;
    justify-content: space-between;
    align-items: center;
    border-top: 1px solid #d8d8d8;
    border-bottom: 1px solid #b9c3c6;
}
.doc-tab {
    width: 79px;
    height: 19px;
    background-color: #fff;
    border-top: 2px solid #a82f43;
    border-right: 1px solid #c9c9c9;
    display: flex;
    align-items: center;
    padding-left: 5px;
    font-size: 9.1px;
    letter-spacing: -0.35px;
}
.tab-ic {
    width: 13px;
    height: 11px;
    margin-right: 7px;
}
.x {
    width: 9px;
    height: 9px;
    margin-left: 10px;
}
.close-all {
    margin-right: 4px;
}
.sheet {
    flex: 1;
    background-color: #fff;
    display: flex;
    flex-direction: column;
    font-family: Calibri, Carlito, Lato, sans-serif;
    font-size: 11.9px;
    color: #444;
}
.row {
    display: grid;
    grid-template-columns: 16px 12px repeat(7, 80px) 81px 80px 77px;
    width: 826px;
    height: 16px;
}
.row > span {
    border-right: 1px solid #dcdfdf;
    border-bottom: 1px solid #dfe2e2;
    padding-left: 2px;
    line-height: 15px;
    height: 16px;
    overflow: hidden;
    display: flex;
    align-items: center;
}
.row > span:first-child {
    background-color: #dce6e8;
    border-color: #c6d1d4;
}
.row.alt > span:not(:first-child) {
    background-color: #f3f3f3;
}
.row.head {
    height: 17px;
}
.row.head > span {
    height: 17px;
    background-color: #dfe6e7;
    border-right-color: #c2cccf;
    border-bottom: 0;
    justify-content: center;
    position: relative;
    padding-right: 14px;
    padding-bottom: 1px;
}
.head > span > svg:not(.clip) {
    position: absolute;
    right: 4px;
    top: 5px;
    width: 7px;
    height: 7px;
}
.row.head > .attach {
    background-color: #fbe074;
    padding: 0;
}
.clip {
    width: 8px;
    height: 12px;
}
.head .add {
    font-style: italic;
}
.row.current > span {
    background-color: #a5d0e8;
    border-right-color: #98c4dc;
    color: #222;
}
.row.current > .edit {
    background-color: #fbdd68;
    padding: 0;
}
.edit svg {
    width: 14px;
    height: 12px;
}
.row > .plus, .row.current > .plus {
    background-color: #fff;
    padding: 0;
    justify-content: center;
}
.plus svg {
    width: 7px;
    height: 7px;
}
.row > .num {
    justify-content: flex-end;
    padding-right: 0;
}
.row.current > .cell-attach {
    background-color: #fff;
    border: 1px solid #efa3aa;
    justify-content: center;
    color: #333;
}
.att {
    justify-content: center;
}
.row.current > .link {
    color: #1a39bd;
    text-decoration: underline;
}
.star {
    padding-left: 3px;
}
.star svg {
    width: 8px;
    height: 8px;
}
.blank {
    flex: 1;
    border-left: 15px solid #f3f7f9;
    background-image: linear-gradient(to top, #f4f4f4 1px, transparent 1px), linear-gradient(to left, #f6f6f6 1px, transparent 1px);
    background-size: 16px 16px, 80px 16px;
    background-position: 0 0, 11px 0;
}
.record-bar {
    height: 15px;
    border-top: 1px solid #aaa;
    background: linear-gradient(#eef1ef 7px, #e0e4e4 7px);
}
.status {
    height: 18px;
    background-color: #f2f2f2;
}

/* taskbar */
.taskbar {
    height: 33px;
    background-color: #d3e6ea;
    border-bottom: 1px solid #345;
    display: flex;
}
.start {
    width: 41px;
    padding: 10px 0 0 13px;
    background-color: #cdeae8;
}
.start svg {
    width: 14px;
    height: 14px;
}
.search-box {
    width: 239px;
    background-color: #fff;
    padding: 16px 0 0 180px;
}
.search-box svg {
    width: 48px;
    height: 16px;
}
.hidden-apps {
    width: 250px;
    display: flex;
    align-items: flex-end;
    gap: 22px;
    padding: 0 0 7px 53px;
}
.hidden-apps i {
    width: 20px;
    height: 16px;
    background-color: #2b9bd2;
}
.hidden-apps .c2 { background-color: #d82f34; border-radius: 8px; width: 14px; }
.hidden-apps .c3 { background-color: #777; transform: rotate(45deg); width: 12px; }
.hidden-apps .c4 { background-color: #444; }
.hidden-apps .c5 { background-color: #1d6eae; border-radius: 8px; }
.task {
    width: 41.1px;
    display: flex;
    justify-content: center;
    padding-top: 7px;
}
.task svg {
    width: 19px;
    height: 19px;
}
.open {
    border-bottom: 2px solid #3b7890;
}
.current-app {
    background-color: #eef6f7;
}
.tray {
    flex: 1;
    display: flex;
    justify-content: space-between;
    padding: 17px 50px 0 146px;
    font-size: 10px;
    line-height: 14px;
}
.tray i {
    width: 12px;
    height: 8px;
    border-radius: 6px;
    background-color: #d6812b;
}

/* file dialog */
.under-dialog {
    position: absolute;
    left: 479px;
    top: 241px;
    width: 8px;
    height: 201px;
    background: #f1f1f1;
    border: 1px solid #999;
    box-shadow: -2px 2px 6px rgba(0, 0, 0, 0.25);
}
.dialog {
    position: absolute;
    left: 485px;
    top: 234px;
    width: 630px;
    height: 396px;
    border: 1px solid #777;
    background-color: #fff;
    box-shadow: 3px 4px 12px rgba(0, 0, 0, 0.35);
    display: flex;
    flex-direction: column;
    font-size: 10px;
    letter-spacing: -0.22px;
    color: #333;
}
.dlg-title {
    height: 24px;
    display: flex;
    align-items: center;
    padding-left: 5px;
}
.dlg-title span {
    flex: 1;
    margin-left: 3px;
}
.dlg-x {
    width: 10px;
    height: 10px;
    margin-right: 9px;
}
.dlg-nav {
    height: 34px;
    display: flex;
    align-items: center;
}
.arrows {
    width: 80px;
    height: 14px;
    margin-left: 4px;
    margin-right: 4px;
}
.path {
    width: 355px;
    height: 26px;
    border: 1px solid #d9d9d9;
    display: flex;
    align-items: center;
    padding-left: 2px;
}
.docs {
    width: 13px;
    height: 14px;
}
.path .right {
    width: 8px;
    height: 8px;
    margin: 0 4px 0 5px;
}
.pc { width: 32px; }
.dc { width: 50px; }
.path .drop {
    width: 11px;
    height: 11px;
    margin-left: auto;
    margin-right: 8px;
    color: #666;
}
.reload {
    width: 28px;
    height: 24px;
    border-left: 1px solid #d9d9d9;
    padding: 6px 0 0 8px;
}
.reload svg {
    width: 12px;
    height: 12px;
}
.search {
    width: 169px;
    height: 26px;
    margin-left: 8px;
    border: 1px solid #d9d9d9;
    display: flex;
    align-items: center;
    padding-left: 11px;
    color: #777;
}
.search svg {
    width: 11px;
    height: 11px;
    margin-right: 11px;
}
.dlg-tools {
    height: 27px;
    background-color: #f2f6f6;
    display: flex;
    align-items: center;
    padding-left: 13px;
    color: #4c5a66;
}
.org {
    width: 43px;
    letter-spacing: -0.1px;
}
.nf {
    flex: 1;
    margin-left: 23px;
    letter-spacing: -0.1px;
}
.tri {
    width: 8px;
    height: 8px;
    color: #222;
}
.view-ics {
    width: 90px;
    height: 14px;
    margin-right: 12px;
}
.dlg-body {
    height: 242px;
    display: flex;
}
.tree {
    width: 112px;
    overflow: hidden;
    padding-top: 7px;
    letter-spacing: -0.12px;
}
.leaf {
    height: 20px;
    display: flex;
    align-items: center;
    padding-left: 26px;
    overflow: hidden;
}
.leaf svg {
    width: 13px;
    height: 14px;
    margin-right: 3.5px;
}
.leaf.top {
    padding-left: 19px;
}
.leaf.top:first-child {
    margin-bottom: 6px;
}
.leaf.sel {
    background-color: #d9d9d9;
    width: 111px;
}
.vbar {
    width: 13px;
    background-color: #f0f0f0;
    display: flex;
    flex-direction: column;
    align-items: center;
    color: #444;
}
.vbar svg, .hbar svg {
    width: 11px;
    height: 13px;
}
.vbar .thumb {
    width: 13px;
}
.tree-bar .thumb {
    height: 96px;
    margin-top: 97px;
    margin-bottom: 21px;
    background-color: #606060;
}
.files {
    width: 503px;
    margin-left: 1px;
    display: flex;
    flex-direction: column;
}
.files-top {
    height: 228px;
    display: flex;
}
.list {
    position: relative;
    width: 489px;
    overflow: hidden;
}
.list-bar {
    width: 13px;
}
.list-bar .thumb {
    height: 80px;
    margin-bottom: 121px;
    background-color: #cacaca;
}
.f {
    height: 18px;
    display: grid;
    grid-template-columns: 16px 200px 120px 100px 35px;
    align-items: center;
    padding-left: 18px;
    color: #777;
}
.f svg {
    width: 13px;
    height: 14px;
}
.f span:nth-child(2) {
    color: #333;
    padding-left: 0.5px;
    letter-spacing: -0.27px;
}
.f span:last-child {
    text-align: right;
}
.f.head {
    height: 22px;
    margin-bottom: 5px;
    padding-left: 0;
    grid-template-columns: 230px 120px 100px 39px;
    color: #5b6b7b;
}
.f.head span {
    height: 22px;
    line-height: 21px;
    color: #5b6b7b;
    padding-left: 4px;
    text-align: left;
    letter-spacing: -0.1px;
    border-right: 1px solid #e5e5e5;
}
.f.head span:first-child {
    padding-left: 16px;
}
.f.head span:last-child {
    border: 0;
}
.sort-mark {
    position: absolute;
    left: 115px;
    top: -3px;
    width: 10px;
    height: 10px;
    color: #888;
}
.hbar {
    height: 14px;
    background-color: #f0f0f0;
    display: flex;
    align-items: center;
    padding-left: 3px;
}
.hbar .thumb {
    width: 424px;
    height: 13px;
    margin-left: 3px;
    background-color: #cbcbcb;
}
.hbar .right {
    margin-left: 34px;
}
.hbar .corner {
    margin-left: auto;
    width: 14px;
    height: 14px;
    background-color: #fff;
}
.dlg-foot {
    flex: 1;
    background-color: #f0f0f0;
    padding-top: 9px;
}
.foot-row {
    display: flex;
    align-items: center;
    height: 22px;
    margin-bottom: 3px;
}
.foot-row label {
    width: 142px;
    text-align: right;
    margin-right: 4px;
}
.name-box {
    width: 302px;
    height: 20px;
    border: 1px solid #559ab9;
    background-color: #fff;
    display: flex;
    align-items: center;
    justify-content: flex-end;
    padding-right: 1px;
    color: #666;
}
.foot-row svg {
    width: 10px;
    height: 10px;
}
.type-box {
    width: 158px;
    height: 20px;
    margin-left: 9px;
    border: 1px solid #bbb;
    background-color: #e2e2e2;
    display: flex;
    align-items: center;
    justify-content: space-between;
    padding: 0 1px 0 2px;
}
.tools {
    width: 24px;
    margin-left: 403px;
}
.foot-row .tri {
    width: 9px;
    height: 9px;
    margin-left: 9px;
    margin-right: 12px;
}
.btn {
    width: 73px;
    height: 21px;
    border: 1px solid #b5b5b5;
    background-color: #e1e1e1;
    line-height: 19px;
    text-align: center;
    margin-left: 10px;
}
.btn.primary {
    border: 2px solid #337ea5;
    line-height: 17px;
    margin-left: 1px;
}
.click-ring {
    position: absolute;
    left: 591px;
    top: 455px;
    width: 25px;
    height: 25px;
    border: 1px solid #3fae93;
    border-radius: 50%;
    display: flex;
    align-items: center;
    justify-content: center;
}
.click-ring i {
    width: 7px;
    height: 7px;
    border-radius: 50%;
    background-color: #1fb393;
}
.pointer {
    position: absolute;
    left: 602px;
    top: 446px;
    width: 10px;
    height: 14px;
}

/* contact banners */
.pill {
    position: absolute;
    left: 0;
    top: 621px;
    width: 566px;
    height: 89px;
    border: 1px solid #fff;
    border-radius: 45px;
    background-color: #000;
    color: #fff;
    font-family: "Liberation Sans", Arial, sans-serif;
    font-size: 34.1px;
    line-height: 88px;
    padding-left: 72px;
}
.phone {
    position: absolute;
    left: 827px;
    top: 621px;
    width: 453px;
    height: 89px;
    background-color: #000;
    color: #fff;
    font-family: "Liberation Sans", Arial, sans-serif;
    font-size: 61.8px;
    line-height: 92px;
    padding-left: 2px;
}
```
